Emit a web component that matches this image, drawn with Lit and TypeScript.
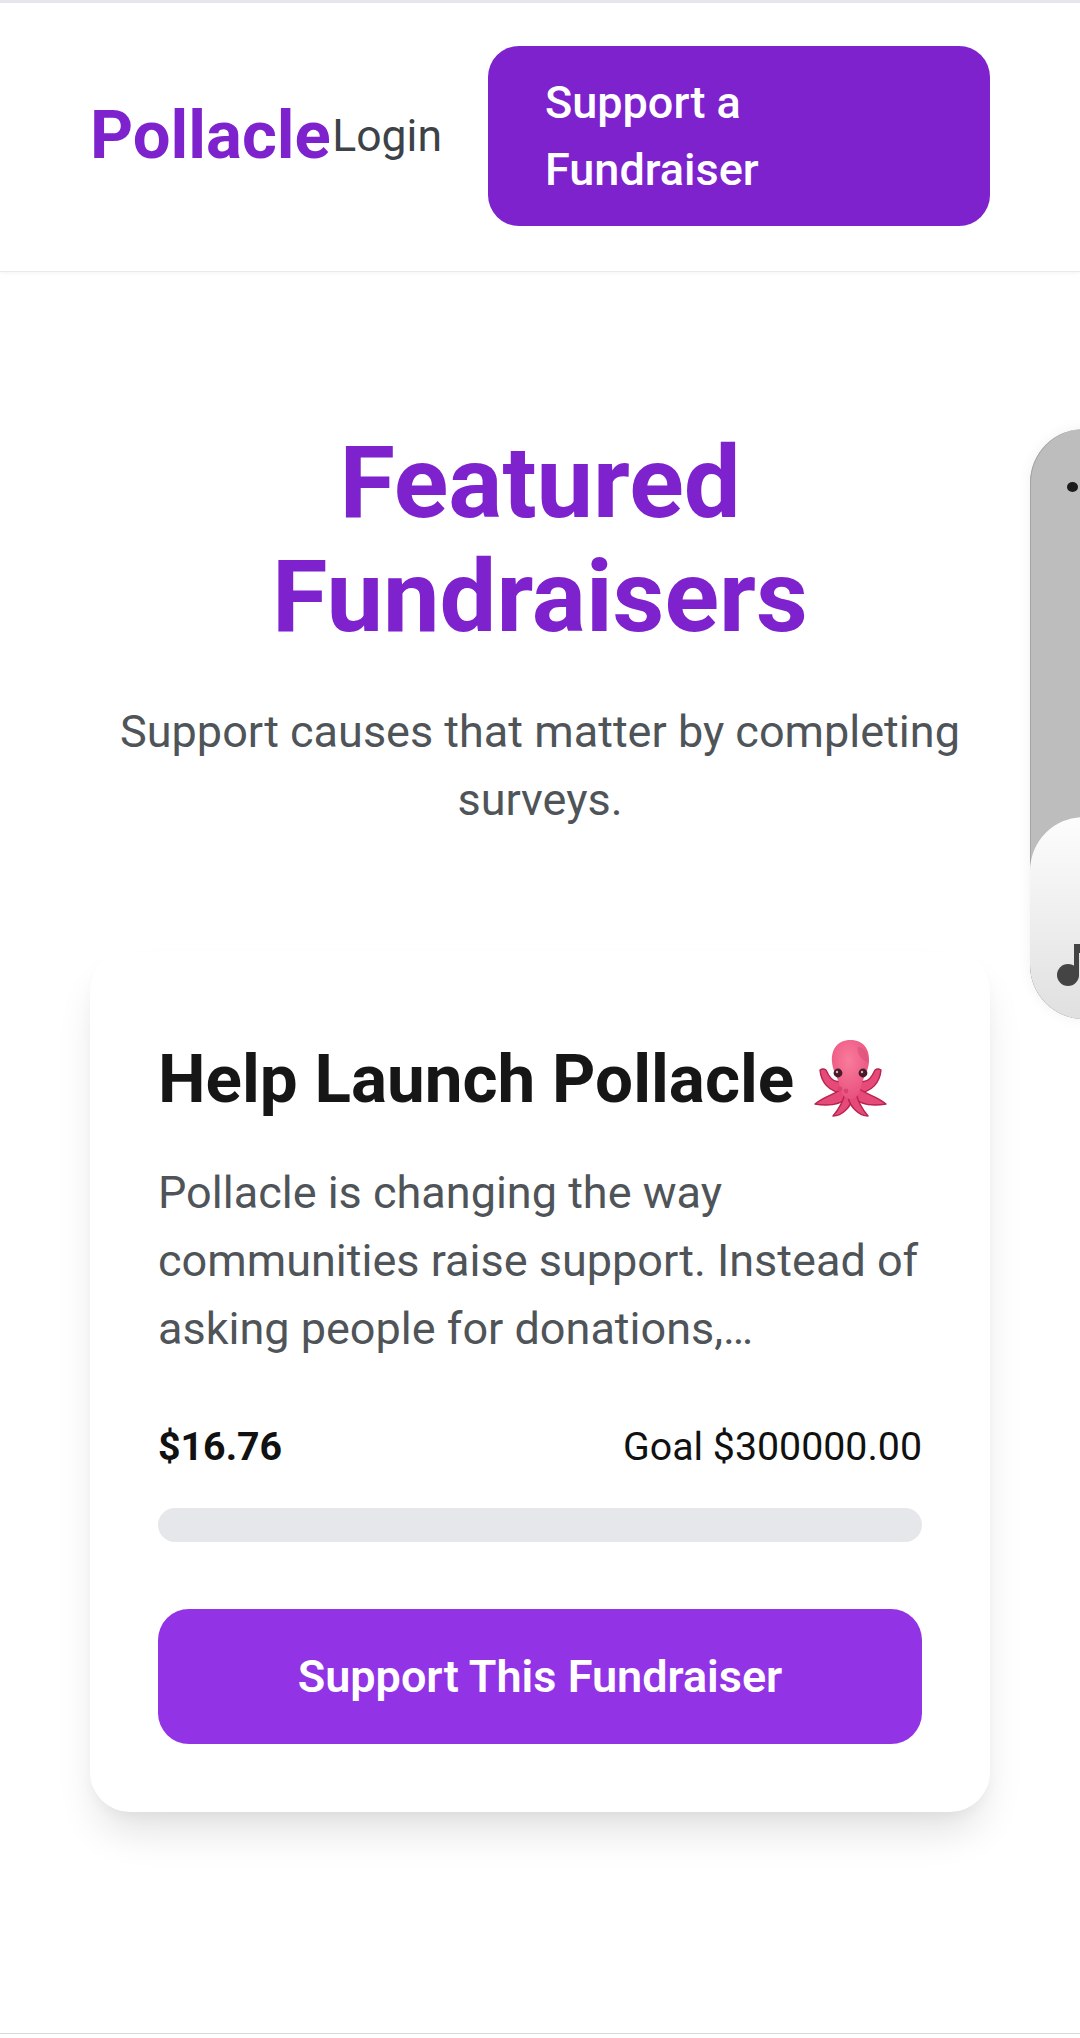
import { LitElement, html, css, svg } from "lit";
import { customElement } from "lit/decorators.js";

const arms = svg`
  <path d="M26 42 C21 44 16 40 12 31 Q9 29 6 31 C7 42 14 54 31 54 Z"/>
  <path d="M30 48 C23 55 10 57 1 65 C12 67 25 67 35 58 Z"/>
  <path d="M31 54 C29 63 25 70 19 77 C28 77 37 68 39 58 Z"/>
`;

const octopus = html`<svg class="octo" viewBox="0 0 73 80" aria-hidden="true">
  <defs>
    <radialGradient id="ob" cx="45%" cy="35%" r="70%"><stop offset="0" stop-color="#f97c9c"/><stop offset="1" stop-color="#e84e7c"/></radialGradient>
  </defs>
  <g fill="#e64a78" stroke="#b8234f" stroke-width="1.4" stroke-linejoin="round">
    ${arms}
    <g transform="translate(73,0) scale(-1,1)">${arms}</g>
  </g>
  <path d="M36.5 1 C23 1 17 11 18 23 C19 33 23 37 25 44 C27 53 29 60 36.5 60 C44 60 46 53 48 44 C50 37 54 33 55 23 C56 11 50 1 36.5 1 Z" fill="url(#ob)"/>
  <path d="M44 8 C50 8 54 14 54 23 C49 23 42 14 44 8Z" fill="#d9507a" opacity=".6"/>
  <circle cx="24" cy="34" r="4.4" fill="#4a1a28"/><circle cx="49" cy="34" r="4.4" fill="#4a1a28"/>
  <circle cx="23" cy="33" r="1.2" fill="#fff" opacity=".7"/><circle cx="48" cy="33" r="1.2" fill="#fff" opacity=".7"/>
  <circle cx="26" cy="50" r="2.4" fill="#d8436f"/><circle cx="32" cy="52" r="2.4" fill="#d8436f"/>
</svg>`;

@customElement("app-root")
export class AppRoot extends LitElement {
  static styles = css`
    :host { display: block; position: relative; height: 2034px; overflow: hidden; background: #fff;
      font-family: Roboto, "Liberation Sans", sans-serif; box-sizing: border-box;
      border-top: 3px solid #e5e7eb; border-bottom: 1px solid #d9d9d9; }
    * { box-sizing: border-box; }
    nav { height: 269px; display: flex; align-items: center; justify-content: space-between;
      padding: 0 90px 3px; border-bottom: 1px solid #e8e9ec; box-shadow: 0 1px 4px rgba(0,0,0,.05); }
    .logo { font-size: 67px; font-weight: 700; color: #7e22ce; line-height: 1; }
    .actions { display: flex; align-items: center; gap: 46px; }
    .login { font-size: 44.5px; color: #3d4248; }
    .cta { width: 502px; height: 180px; border-radius: 31px; background: #7e22ce; color: #fff;
      font-size: 45px; font-weight: 500; line-height: 67.6px; padding: 23px 57px; }
    main { padding: 154px 90px 0; }
    h1 { margin: 0; font-size: 101px; font-weight: 700; line-height: 114px; color: #7e22ce; text-align: center; }
    .sub { margin: 44px auto 0; font-size: 45px; line-height: 67.6px; color: #4f5459; text-align: center; }
    .card { margin-top: 118px; background: #fff; border-radius: 40px; padding: 77px 68px 68px;
      box-shadow: 0 26px 42px -8px rgba(0,0,0,.12), 0 8px 16px -6px rgba(0,0,0,.05); }
    h2 { margin: 0; display: flex; align-items: center; gap: 20px; font-size: 67.4px; font-weight: 700;
      line-height: 101px; color: #161616; }
    .octo { width: 73px; height: 80px; flex: none; }
    .desc { margin: 30px 0 0; font-size: 45px; line-height: 68px; color: #4f5459; }
    .stats { margin-top: 58px; display: flex; justify-content: space-between; align-items: center;
      font-size: 39.3px; line-height: 52px; color: #111; }
    .stats b { font-weight: 700; }
    .bar { margin-top: 35px; height: 34px; border-radius: 17px; background: #e5e7ea; }
    .btn { margin-top: 67px; height: 135px; border-radius: 31px; background: #9333e6; color: #fff;
      display: flex; align-items: center; justify-content: center; font-size: 45px; font-weight: 600; }
    .side { position: absolute; left: 1030px; top: 426px; width: 120px; height: 590px; border-radius: 54px;
      background: #bdbdbd; overflow: hidden; box-shadow: 0 0 14px rgba(0,0,0,.06), inset 1px 0 0 #a3a3a3; }
    .dot { position: absolute; left: 37px; top: 53px; width: 11px; height: 10px; border-radius: 50%; background: #1c1c1e; }
    .sheet { position: absolute; left: 0; right: 0; bottom: 0; height: 202px; border-radius: 54px;
      background: linear-gradient(#fdfdfd, #e0e0e0); }
    .note { position: absolute; left: 27px; top: 514px; width: 26px; height: 46px; }
  `;

  render() {
    return html`
      <nav>
        <div class="logo">Pollacle</div>
        <div class="actions">
          <span class="login">Login</span>
          <div class="cta">Support a<br />Fundraiser</div>
        </div>
      </nav>
      <main>
        <h1>Featured<br />Fundraisers</h1>
        <p class="sub">Support causes that matter by completing surveys.</p>
        <section class="card">
          <h2>Help Launch Pollacle ${octopus}</h2>
          <p class="desc">Pollacle is changing the way communities raise support. Instead of asking people for donations,…</p>
          <div class="stats"><b>$16.76</b><span>Goal $300000.00</span></div>
          <div class="bar"></div>
          <div class="btn">Support This Fundraiser</div>
        </section>
      </main>
      <div class="side">
        <div class="dot"></div>
        <div class="sheet"></div>
        <svg class="note" viewBox="0 0 26 46"><circle cx="11" cy="32" r="11" fill="#444"/><path d="M17 32V1h9v9h-4v22z" fill="#444"/></svg>
      </div>
    `;
  }
}
